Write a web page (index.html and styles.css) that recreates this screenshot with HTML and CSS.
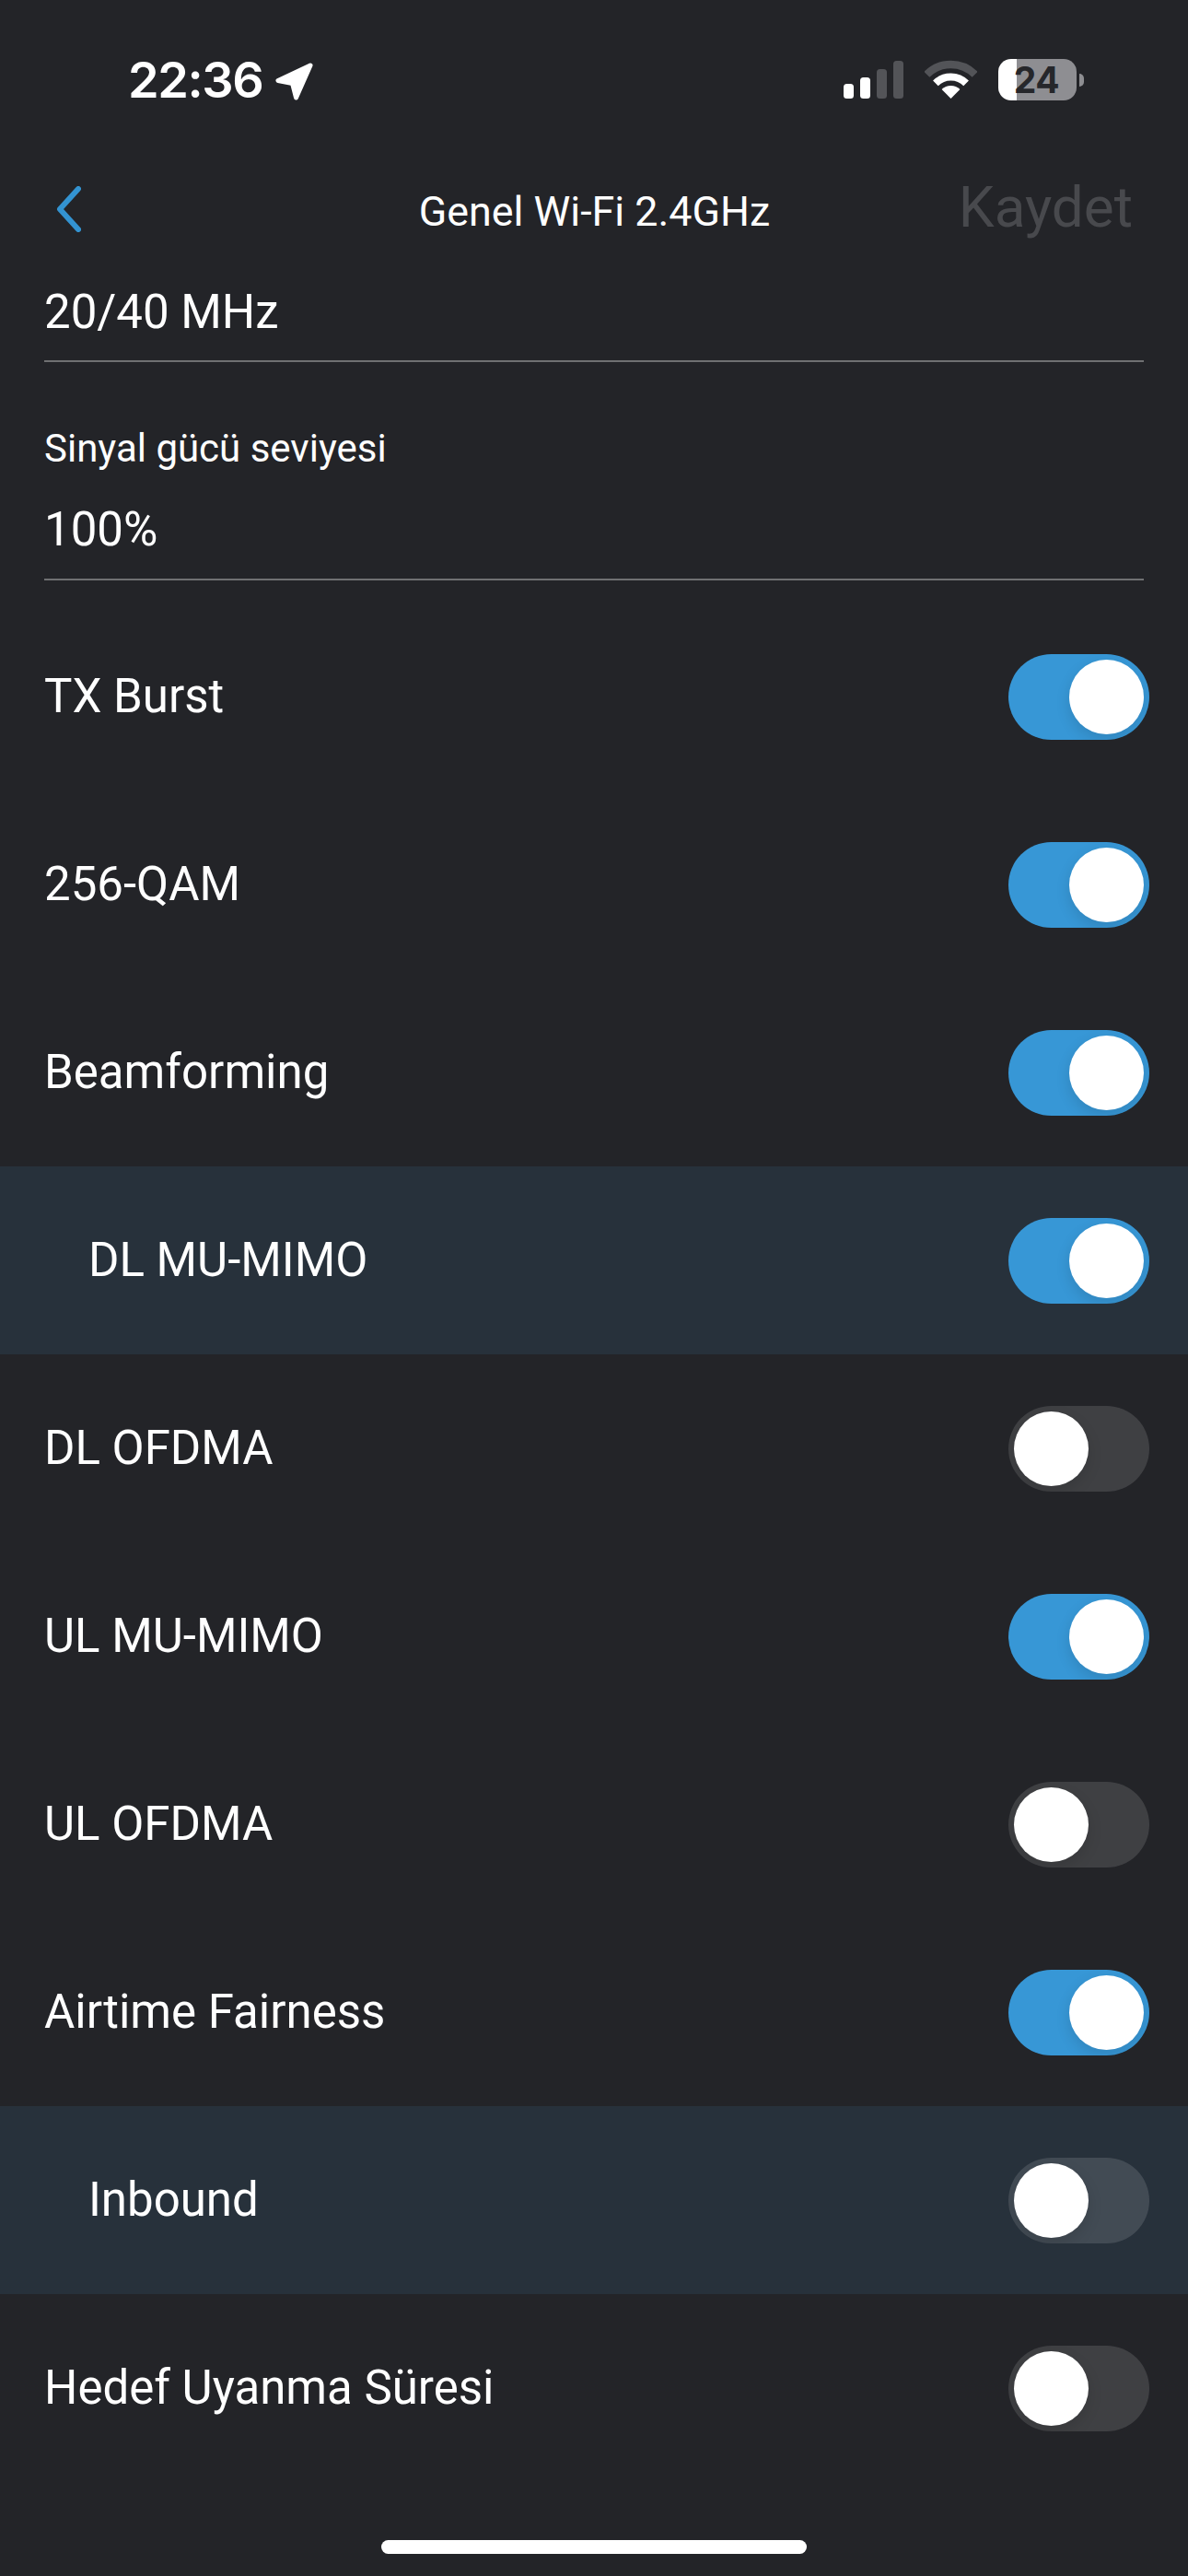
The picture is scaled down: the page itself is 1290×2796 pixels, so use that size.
FILE: index.html
```html
<!DOCTYPE html>
<html lang="tr">
<head>
<meta charset="utf-8">
<title>Genel Wi-Fi 2.4GHz</title>
<link rel="stylesheet" href="styles.css">
</head>
<body>
<main class="screen">
  <header class="status">
    <div class="status-left">
      <span class="time">22:36</span>
      <svg class="loc" viewBox="0 0 42 42"><path d="M38 4 L3 20.5 L18.5 23.5 L22.5 39 Z"/></svg>
    </div>
    <div class="status-right">
      <div class="signal">
        <span class="bar b1"></span><span class="bar b2"></span><span class="bar b3 dim"></span><span class="bar b4 dim"></span>
      </div>
      <svg class="wifi" viewBox="0 0 57 42">
        <path class="wifi-dim" d="M2.34 15.84 A37 37 0 0 1 54.66 15.84"/>
        <path class="wifi-on" d="M11.9 25.4 A23.5 23.5 0 0 1 45.1 25.4"/>
        <path class="wifi-tip" d="M28.5 42 L18.6 32.1 A14 14 0 0 1 38.4 32.1 Z"/>
      </svg>
      <div class="battery"><div class="battery-body">24</div><span class="battery-cap"></span></div>
    </div>
  </header>

  <nav class="nav">
    <svg class="back" viewBox="0 0 27 50"><path d="M24 3 L4 25 L24 47"/></svg>
    <h1 class="title">Genel Wi-Fi 2.4GHz</h1>
    <span class="save">Kaydet</span>
  </nav>

  <section class="field first">
    <div class="value">20/40 MHz</div>
  </section>
  <section class="field">
    <div class="label">Sinyal gücü seviyesi</div>
    <div class="value">100%</div>
  </section>

  <section class="rows">
    <div class="row"><span class="name">TX Burst</span><span class="toggle on"><i></i></span></div>
    <div class="row"><span class="name">256-QAM</span><span class="toggle on"><i></i></span></div>
    <div class="row"><span class="name">Beamforming</span><span class="toggle on"><i></i></span></div>
    <div class="row sub"><span class="name">DL MU-MIMO</span><span class="toggle on"><i></i></span></div>
    <div class="row"><span class="name">DL OFDMA</span><span class="toggle"><i></i></span></div>
    <div class="row"><span class="name">UL MU-MIMO</span><span class="toggle on"><i></i></span></div>
    <div class="row"><span class="name">UL OFDMA</span><span class="toggle"><i></i></span></div>
    <div class="row"><span class="name">Airtime Fairness</span><span class="toggle on"><i></i></span></div>
    <div class="row sub"><span class="name">Inbound</span><span class="toggle"><i></i></span></div>
    <div class="row"><span class="name">Hedef Uyanma Süresi</span><span class="toggle"><i></i></span></div>
  </section>

  <div class="home"><span class="home-bar"></span></div>
</main>
</body>
</html>
```
FILE: styles.css
```css
* { box-sizing: border-box; }
html, body { margin: 0; padding: 0; background: #232428; }
body { font-family: Roboto, "Noto Sans", sans-serif; color: #fff; }
.screen { width: 1290px; height: 2796px; overflow: hidden; display: flex; flex-direction: column; }

.status { height: 170px; padding: 64px 113px 0 139px; display: flex; justify-content: space-between; align-items: flex-start; }
.status-left { display: flex; align-items: flex-start; }
.time { font-family: Inter, sans-serif; font-weight: 600; font-size: 54px; line-height: 46px; letter-spacing: -1.4px; width: 160px; }
.loc { width: 42px; height: 42px; margin-top: 3px; }
.loc path { fill: #fff; stroke: #fff; stroke-width: 5; stroke-linejoin: round; }
.status-right { display: flex; align-items: flex-end; height: 45px; }
.signal { display: flex; align-items: flex-end; gap: 7px; height: 41px; margin-bottom: 2px; }
.bar { width: 11px; background: #fff; border-radius: 3.5px; }
.bar.dim { background: #535458; }
.b1 { height: 16px; }
.b2 { height: 23px; }
.b3 { height: 32px; }
.b4 { height: 41px; }
.wifi { width: 57px; height: 42px; margin: 0 23px 2px 23px; }
.wifi-dim { fill: none; stroke: #535458; stroke-width: 8.5; }
.wifi-on { fill: none; stroke: #fff; stroke-width: 8; }
.wifi-tip { fill: #fff; }
.battery { display: flex; align-items: center; gap: 3px; height: 45px; }
.battery-body { width: 85px; height: 45px; border-radius: 14px; background: linear-gradient(90deg, #fff 0 20px, #8e8e92 20px 100%); color: #26272b; font-family: Inter, sans-serif; font-weight: 700; font-size: 39px; line-height: 45px; letter-spacing: -.5px; text-align: center; padding-right: 2px; }
.battery-cap { width: 5px; height: 14px; background: #8e8e92; border-radius: 0 7px 7px 0; }

.nav { height: 114px; padding: 0 60px 0 61px; display: grid; grid-template-columns: 1fr auto 1fr; align-items: center; }
.back { width: 27px; height: 50px; }
.back path { fill: none; stroke: #3393d1; stroke-width: 6; stroke-linecap: round; stroke-linejoin: round; }
.title { margin: 0; font-size: 44.8px; line-height: 54px; font-weight: 400; padding-top: 6px; }
.save { justify-self: end; font-size: 62px; line-height: 70px; color: #48494d; margin-top: -5px; }

.field { margin: 0 48px; border-bottom: 2px solid #6f7072; padding-top: 70px; padding-bottom: 23px; }
.field.first { padding-top: 25px; padding-bottom: 22px; }
.label { font-size: 42px; line-height: 48px; margin-bottom: 34px; }
.value { font-size: 51px; line-height: 60px; }

.rows { margin-top: 24px; }
.row { height: 204px; padding: 0 42px 0 48px; display: flex; align-items: center; justify-content: space-between; font-size: 51px; }
.row.sub { background: #27313b; padding-left: 96px; }
.name { padding-bottom: 2px; }

.toggle { width: 153px; height: 93px; border-radius: 47px; padding: 6px; display: flex; background: rgba(255,255,255,.13); overflow: hidden; }
.toggle.on { background: #3797d6; justify-content: flex-end; }
.toggle i { width: 81px; height: 81px; border-radius: 50%; background: #fff; box-shadow: 0 6px 16px rgba(0,0,0,.12); }

.home { flex: 1; position: relative; }
.home-bar { position: absolute; left: 414px; top: 63px; width: 462px; height: 15px; border-radius: 8px; background: #fff; }
```
